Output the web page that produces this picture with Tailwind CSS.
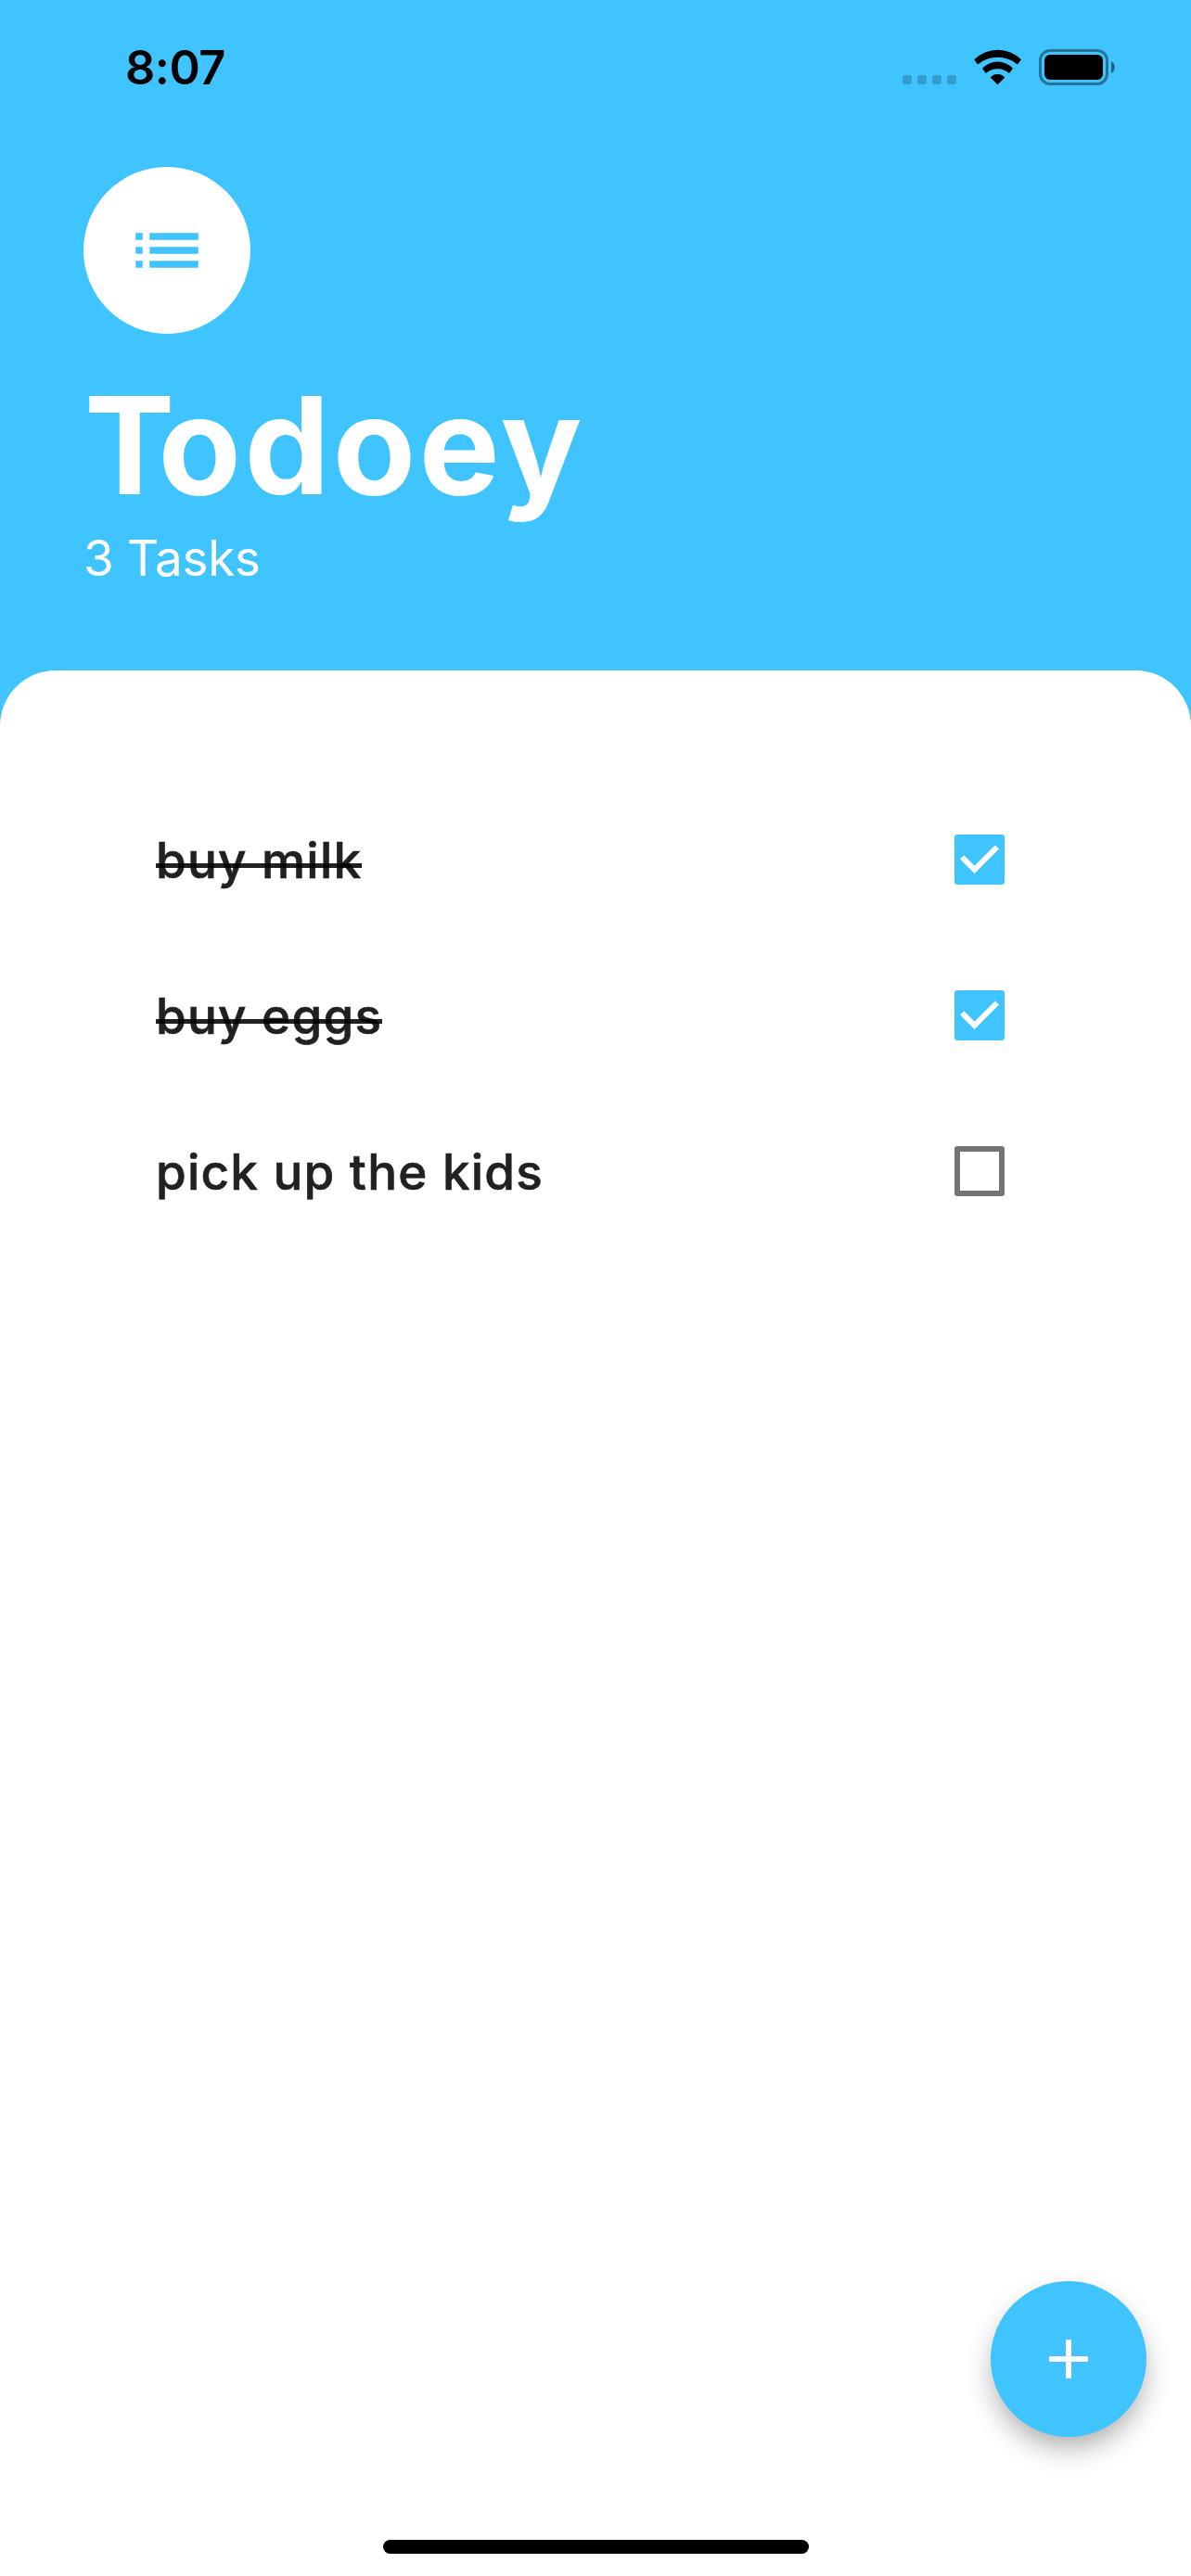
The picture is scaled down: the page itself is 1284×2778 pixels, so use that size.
<!DOCTYPE html>
<html lang="en">
<head>
<meta charset="utf-8">
<title>Todoey</title>
<script src="https://cdn.jsdelivr.net/npm/@tailwindcss/browser@4"></script>
</head>
<body class="bg-[#40c4ff]">
<div class="relative flex flex-col w-[1284px] h-[2778px] overflow-hidden bg-[#40c4ff] font-['Inter',sans-serif]">
  <!-- Status bar -->
  <div class="flex h-[180px] shrink-0 justify-between pl-[135px] pr-[81px] pt-[43px]">
    <div class="h-[60px] text-[50.5px] leading-[60px] font-semibold tracking-[-0.5px] text-black whitespace-nowrap">8:07</div>
    <div class="flex items-start pt-[10px]">
      <div class="flex gap-[6px] pt-[28px]">
        <span class="size-[10px] rounded-[3px] bg-black/20"></span>
        <span class="size-[10px] rounded-[3px] bg-black/20"></span>
        <span class="size-[10px] rounded-[3px] bg-black/20"></span>
        <span class="size-[10px] rounded-[3px] bg-black/20"></span>
      </div>
      <svg class="ml-[19px]" width="52" height="39" viewBox="0 0 52 39">
        <path d="M.3 11.3A35.5 35.5 0 0 1 51 11.3L47 16.4A33.7 33.7 0 0 0 4 16.4Z"/>
        <path d="M9 20.7A22.7 22.7 0 0 1 42 20.7L38.1 26A18.9 18.9 0 0 0 12.8 26Z"/>
        <path d="M17.6 30.4A11 11 0 0 1 33.4 30.4L25.5 38.2Z"/>
      </svg>
      <svg class="ml-[18px]" width="83" height="39" viewBox="0 0 83 39">
        <rect x="1.5" y="1.5" width="72" height="36" rx="10.5" fill="none" stroke="#000" stroke-opacity=".4" stroke-width="3"/>
        <rect x="6" y="6" width="63" height="27" rx="6"/>
        <path d="M78 13C83 15.5 83 23.5 78 26Z" fill-opacity=".5"/>
      </svg>
    </div>
  </div>

  <!-- Header -->
  <div class="flex flex-col h-[543px] shrink-0 items-start pl-[90px] text-white">
    <div class="flex size-[180px] items-center justify-center rounded-full bg-white">
      <svg width="90" height="90" viewBox="0 0 24 24" fill="#40c4ff"><path d="M3 13h2v-2H3v2zm0 4h2v-2H3v2zm0-8h2V7H3v2zm4 4h14v-2H7v2zm0 4h14v-2H7v2zM7 7v2h14V7H7z"/></svg>
    </div>
    <h1 class="mt-[31px] pl-px text-[146px] leading-[179px] font-bold tracking-[3.4px] whitespace-nowrap"><span class="tracking-[-18px]">T</span>odoey</h1>
    <p class="text-[53px] leading-[64px] tracking-[-0.3px] whitespace-nowrap">3 Tasks</p>
  </div>

  <!-- Task list -->
  <ul class="flex-1 rounded-t-[60px] bg-white pt-[120px] pl-[168px] pr-[201px] text-[53px] leading-[64px] font-medium tracking-[1.2px] text-[#212121]">
    <li class="flex h-[168px] items-center justify-between">
      <span class="relative pt-px whitespace-nowrap [-webkit-text-stroke:0.6px_#212121]">buy milk<i class="absolute inset-x-0 top-[36px] h-[5px] bg-black/87"></i></span>
      <svg class="rounded-[3px] bg-[#40c4ff]" width="54" height="54" viewBox="0 0 54 54"><path d="M8.1 24.3L21.6 37.8L45.9 13.5" fill="none" stroke="#fff" stroke-width="6"/></svg>
    </li>
    <li class="flex h-[168px] items-center justify-between">
      <span class="relative pt-px whitespace-nowrap [-webkit-text-stroke:0.6px_#212121]">buy eggs<i class="absolute inset-x-0 top-[36px] h-[5px] bg-black/87"></i></span>
      <svg class="rounded-[3px] bg-[#40c4ff]" width="54" height="54" viewBox="0 0 54 54"><path d="M8.1 24.3L21.6 37.8L45.9 13.5" fill="none" stroke="#fff" stroke-width="6"/></svg>
    </li>
    <li class="flex h-[168px] items-center justify-between">
      <span class="pt-px whitespace-nowrap [-webkit-text-stroke:0.6px_#212121]">pick up the kids</span>
      <span class="size-[54px] rounded-[3px] border-[6px] border-[#757575]"></span>
    </li>
  </ul>

  <!-- Floating add button -->
  <button class="absolute right-12 bottom-[150px] flex size-[168px] items-center justify-center rounded-full bg-[#40c4ff] shadow-[0_14px_30px_-3px_rgba(0,0,0,0.33)]">
    <svg width="72" height="72" viewBox="0 0 24 24" fill="#fff"><path d="M19 13h-6v6h-2v-6H5v-2h6V5h2v6h6v2z"/></svg>
  </button>

  <!-- Home indicator -->
  <div class="absolute bottom-6 left-[413px] h-[15px] w-[459px] rounded-full bg-black"></div>
</div>
</body>
</html>
